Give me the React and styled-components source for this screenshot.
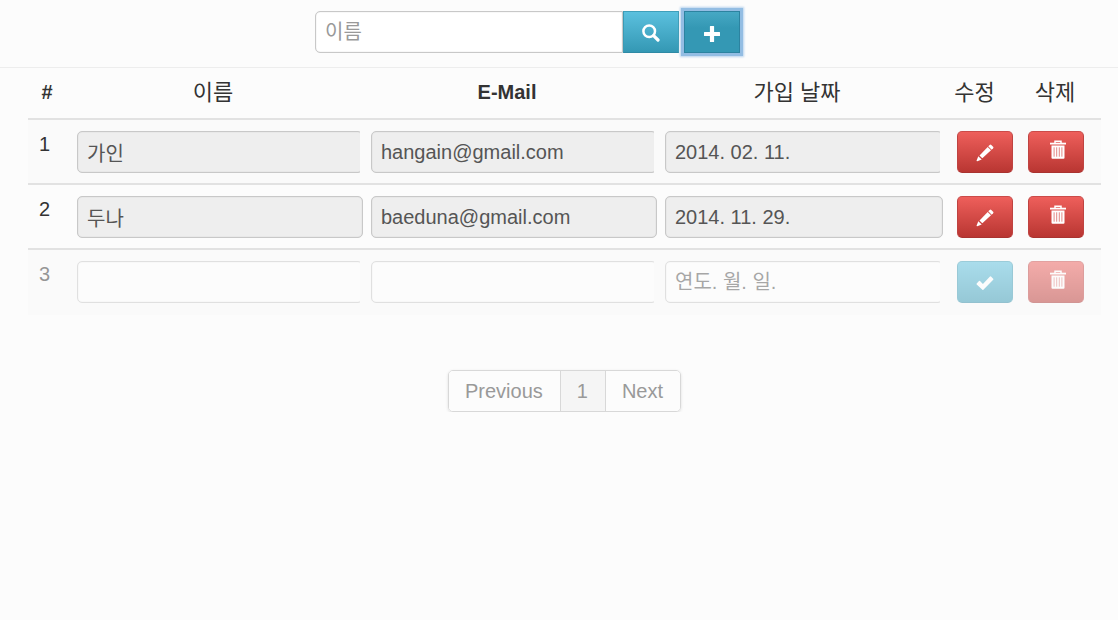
import React from "react";
import styled, { createGlobalStyle, css } from "styled-components";

const GlobalStyle = createGlobalStyle`
  *, *::before, *::after { box-sizing: border-box; }
  body {
    margin: 0;
    background: #fcfcfc;
    color: #333;
    font-family: "Liberation Sans", "Noto Sans CJK KR", sans-serif;
    font-size: 20px;
    line-height: 27px;
  }
`;

const TopBar = styled.header`
  display: flex;
  justify-content: center;
  padding: 11px 63px 14px 0;
  border-bottom: 1px solid #ededed;
`;

const SearchForm = styled.form`
  display: flex;
  width: 425px;
  max-width: 100%;
`;

const fieldStyle = css`
  height: 42px;
  padding: 0 9px;
  border: 1px solid #c8c8c8;
  border-radius: 5px;
  background: #fff;
  box-shadow: inset 0 0 1px #bbb;
  color: #555;
  font: inherit;
  outline: none;
`;

const SearchInput = styled.input`
  ${fieldStyle}
  flex: 1;
  min-width: 0;
  border-radius: 5px 0 0 5px;
  &::placeholder { color: #999; opacity: 1; }
`;

const tones = {
  info: css`
    border-color: #3f9fba #3a9ab4 #2f8aa5;
    background: linear-gradient(#5bc0de, #3498b4);
  `,
  danger: css`
    border-color: #cb4b49 #bf4341 #a93330;
    background: linear-gradient(#ee5f5b, #b93632);
  `,
};

const IconButton = styled.button`
  display: inline-flex;
  align-items: center;
  justify-content: center;
  width: 56px;
  height: 42px;
  padding: ${(p) => (p.$raised ? "0 0 5px 3px" : "2px 0 0")};
  border: 1px solid;
  border-radius: ${(p) => (p.$square ? "0" : "5px")};
  color: #fff;
  vertical-align: top;
  ${(p) => tones[p.$tone]}
`;

const AddButton = styled(IconButton)`
  margin-left: 5px;
  padding: 4px 0 0;
  border-color: #2c83a0;
  background: linear-gradient(#46a8c4, #3498b4 40%);
  box-shadow: 0 0 0 3px #93bde3, 0 0 2px 4px #b9d4ee;
  outline: none;
`;

const Main = styled.main`
  padding: 0 17px 0 28px;
`;

const Table = styled.table`
  width: 100%;
  table-layout: fixed;
  border-collapse: separate;
  border-spacing: 0;
`;

const Column = styled.col`
  width: ${(p) => p.$width};
`;

const HeadCell = styled.th`
  height: 52px;
  padding: 0 ${(p) => (p.$action ? "8px" : "0")} 2px 0;
  border-bottom: 2px solid #e2e2e2;
  font-weight: ${(p) => (p.$latin ? 700 : 400)};
  font-size: ${(p) => (p.$latin ? "20px" : "22px")};
  line-height: 27px;
  text-align: center;
  white-space: nowrap;
`;

const Row = styled.tr`
  background: ${(p) => (p.$striped ? "#fafafa" : "#fcfcfc")};
`;

const Cell = styled.td`
  height: 65px;
  padding: 11px 0 10px 11px;
  border-bottom: ${(p) => (p.$last ? "0" : "2px solid #e2e2e2")};
  vertical-align: top;
`;

const Fade = styled.div`
  opacity: ${(p) => (p.$draft ? 0.5 : 1)};
`;

const FieldWrap = styled(Fade)`
  overflow: ${(p) => (p.$clipped ? "hidden" : "visible")};
`;

const EditWrap = styled(Fade)`
  padding-left: 6px;
`;

const Field = styled.input`
  ${fieldStyle}
  display: block;
  width: calc(100% + 3px);
  &:disabled { background: #eee; color: #555; opacity: 1; }
  &::placeholder { color: #555; opacity: 1; }
`;

const Pager = styled.nav`
  display: flex;
  justify-content: center;
  margin-top: 55px;
`;

const PageList = styled.div`
  display: flex;
  border: 1px solid #d8d8d8;
  border-radius: 5px;
  box-shadow: 0 1px 3px rgba(0, 0, 0, 0.12);
  overflow: hidden;
`;

const PageLink = styled.a`
  padding: 7px 17px 6px 16px;
  background: ${(p) => (p.$current ? "#f5f5f5" : "#fcfcfc")};
  color: #999;
  text-decoration: none;
  & + & { border-left: 1px solid #d8d8d8; }
`;

const Svg = styled.svg`
  display: block;
  flex: none;
`;

const SearchIcon = () => (
  <Svg width="18" height="18" viewBox="0 0 18 18" fill="none" stroke="currentColor" aria-hidden="true">
    <circle cx="7.2" cy="7.2" r="5.8" strokeWidth="2.5" />
    <path d="M11.6 11.6 16 16" strokeWidth="3.2" strokeLinecap="round" />
  </Svg>
);

const PlusIcon = () => (
  <Svg width="16" height="16" viewBox="0 0 16 16" fill="currentColor" aria-hidden="true">
    <path d="M6.4 0h3.2q.5 0 .5.5v5.4h5.4q.5 0 .5.5v3.2q0 .5-.5.5h-5.4v5.4q0 .5-.5.5H6.4q-.5 0-.5-.5v-5.4H.5q-.5 0-.5-.5V6.400q0-.5.5-.5h5.400V.5q0-.5.5-.5z" />
  </Svg>
);

const PencilIcon = () => (
  <Svg width="18" height="18" viewBox="0 0 18 18" fill="currentColor" aria-hidden="true">
    <path d="M13.700.9q.8-.8 1.600 0l1.800 1.800q.8.8 0 1.600l-1.400 1.400-3.400-3.400z" />
    <path d="M11.700 3 15 6.300 6.300 14.300 3.500 11.500z" />
    <path d="M2.300 12.200 5.700 15.600 1.300 17.200q-.9.100-.7-.7z" />
  </Svg>
);

const CheckIcon = () => (
  <Svg width="18" height="16" viewBox="0 0 18 16" fill="currentColor" aria-hidden="true">
    <path d="M.7 8.400 3 6.100q.5-.5 1 0l2.900 2.900L14 1.500q.5-.5 1 0l2.200 2.200q.5.5 0 1L7.400 14.800q-.5.5-1 0L.7 9.400q-.5-.5 0-1z" />
  </Svg>
);

const TrashIcon = () => (
  <Svg width="16" height="19" viewBox="0 0 16 19" fill="none" stroke="currentColor" aria-hidden="true">
    <path d="M5 3V1.200h6V3" strokeWidth="1.500" />
    <path d="M0 3.600h16" strokeWidth="1.800" />
    <path d="M1.500 5.500h13v12.200q0 1-1 1H2.500q-1 0-1-1z" fill="currentColor" stroke="none" />
    <path d="M4.100 7.300v9.400M6.700 7.300v9.400M9.300 7.300v9.400M11.900 7.300v9.400" stroke="#e07b78" strokeWidth=".9" />
  </Svg>
);

const members = [
  { id: 1, name: "가인", email: "hangain@gmail.com", date: "2014. 02. 11." },
  { id: 2, name: "두나", email: "baeduna@gmail.com", date: "2014. 11. 29." },
  { id: 3, name: "", email: "", date: "", draft: true },
];

const fields = [
  { key: "name", label: "이름" },
  { key: "email", label: "E-Mail" },
  { key: "date", label: "가입 날짜", hint: "연도. 월. 일." },
];

function MemberRow({ member, last }) {
  const { draft } = member;
  const odd = member.id % 2 === 1;
  return (
    <Row $striped={odd}>
      <Cell $last={last}>
        <Fade $draft={draft}>{member.id}</Fade>
      </Cell>
      {fields.map((f) => (
        <Cell key={f.key} $last={last}>
          <FieldWrap $draft={draft} $clipped={odd}>
            <Field
              type="text"
              aria-label={f.label}
              defaultValue={member[f.key]}
              placeholder={f.hint}
              disabled={!draft}
            />
          </FieldWrap>
        </Cell>
      ))}
      <Cell $last={last}>
        <EditWrap $draft={draft}>
          <IconButton type="button" $tone={draft ? "info" : "danger"} aria-label={draft ? "저장" : "수정"}>
            {draft ? <CheckIcon /> : <PencilIcon />}
          </IconButton>
        </EditWrap>
      </Cell>
      <Cell $last={last}>
        <Fade $draft={draft}>
          <IconButton type="button" $tone="danger" $raised aria-label="삭제">
            <TrashIcon />
          </IconButton>
        </Fade>
      </Cell>
    </Row>
  );
}

export default function App() {
  return (
    <>
      <GlobalStyle />
      <TopBar>
        <SearchForm role="search" onSubmit={(e) => e.preventDefault()}>
          <SearchInput type="text" placeholder="이름" aria-label="이름" />
          <IconButton type="submit" $tone="info" $square aria-label="검색">
            <SearchIcon />
          </IconButton>
          <AddButton type="button" $tone="info" $square aria-label="추가">
            <PlusIcon />
          </AddButton>
        </SearchForm>
      </TopBar>
      <Main>
        <Table>
          <colgroup>
            <Column $width="38px" />
            <Column $width="27.4%" />
            <Column $width="27.4%" />
            <Column />
            <Column $width="77px" />
            <Column $width="84px" />
          </colgroup>
          <thead>
            <tr>
              <HeadCell $latin>#</HeadCell>
              <HeadCell>이름</HeadCell>
              <HeadCell $latin>E-Mail</HeadCell>
              <HeadCell>가입 날짜</HeadCell>
              <HeadCell $action>수정</HeadCell>
              <HeadCell $action>삭제</HeadCell>
            </tr>
          </thead>
          <tbody>
            {members.map((m, i) => (
              <MemberRow key={m.id} member={m} last={i === members.length - 1} />
            ))}
          </tbody>
        </Table>
        <Pager aria-label="페이지">
          <PageList>
            <PageLink href="#previous">Previous</PageLink>
            <PageLink href="#1" $current aria-current="page">1</PageLink>
            <PageLink href="#next">Next</PageLink>
          </PageList>
        </Pager>
      </Main>
    </>
  );
}
